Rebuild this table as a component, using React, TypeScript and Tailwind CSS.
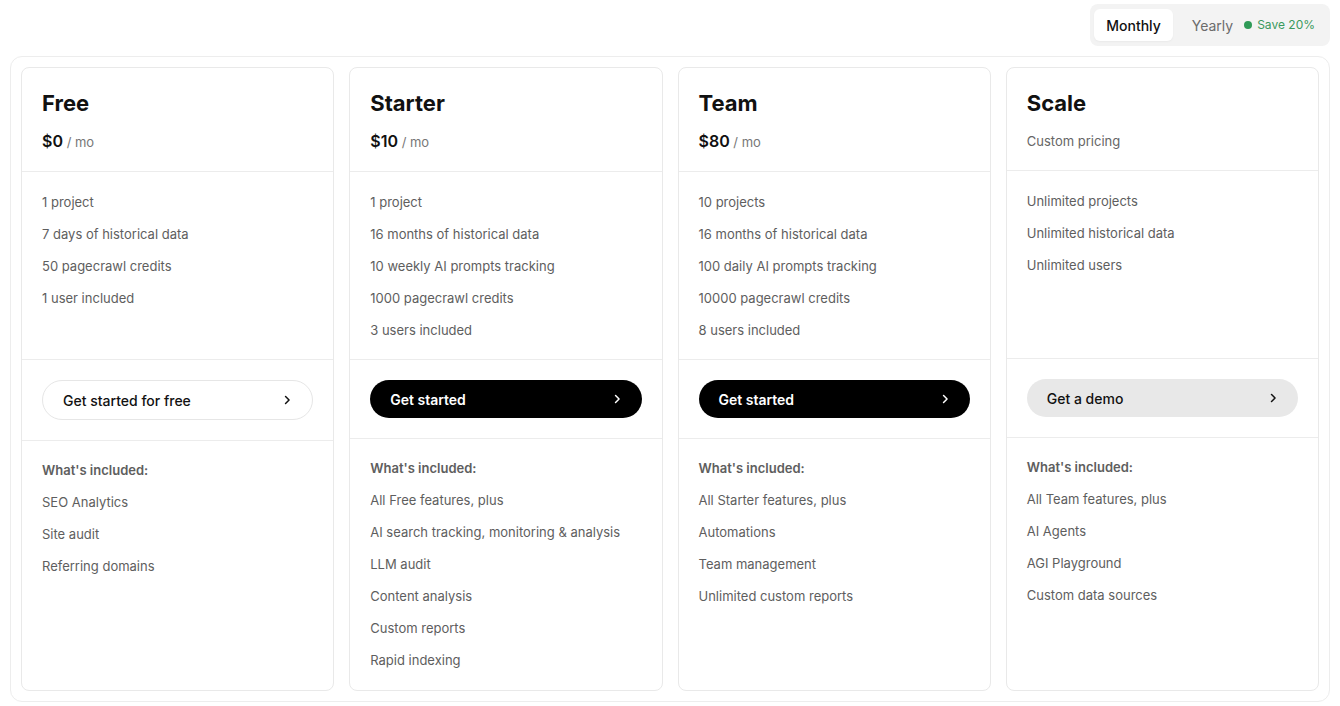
import React from "react";

type Plan = {
  name: string;
  price?: string;
  custom?: string;
  features: string[];
  cta: string;
  variant: "outline" | "dark" | "gray";
  included: string[];
};

const plans: Plan[] = [
  {
    name: "Free",
    price: "$0",
    features: ["1 project", "7 days of historical data", "50 pagecrawl credits", "1 user included"],
    cta: "Get started for free",
    variant: "outline",
    included: ["SEO Analytics", "Site audit", "Referring domains"],
  },
  {
    name: "Starter",
    price: "$10",
    features: [
      "1 project",
      "16 months of historical data",
      "10 weekly AI prompts tracking",
      "1000 pagecrawl credits",
      "3 users included",
    ],
    cta: "Get started",
    variant: "dark",
    included: [
      "All Free features, plus",
      "AI search tracking, monitoring & analysis",
      "LLM audit",
      "Content analysis",
      "Custom reports",
      "Rapid indexing",
    ],
  },
  {
    name: "Team",
    price: "$80",
    features: [
      "10 projects",
      "16 months of historical data",
      "100 daily AI prompts tracking",
      "10000 pagecrawl credits",
      "8 users included",
    ],
    cta: "Get started",
    variant: "dark",
    included: ["All Starter features, plus", "Automations", "Team management", "Unlimited custom reports"],
  },
  {
    name: "Scale",
    custom: "Custom pricing",
    features: ["Unlimited projects", "Unlimited historical data", "Unlimited users"],
    cta: "Get a demo",
    variant: "gray",
    included: ["All Team features, plus", "AI Agents", "AGI Playground", "Custom data sources"],
  },
];

function Chevron({ className }: { className?: string }) {
  return (
    <svg
      width="14"
      height="14"
      viewBox="0 0 24 24"
      fill="none"
      stroke="currentColor"
      strokeWidth="2.6"
      strokeLinecap="round"
      strokeLinejoin="round"
      className={className}
    >
      <path d="m9.5 18 6-6-6-6" />
    </svg>
  );
}

function Card({ plan }: { plan: Plan }) {
  const btnBase =
    "flex w-full items-center justify-between rounded-full pl-5 pr-[18px] text-[14px]";
  let btn = "";
  if (plan.variant === "outline") btn = "h-10 border border-[#e6e6e6] bg-white text-[#111] font-medium";
  if (plan.variant === "dark") btn = "h-[38px] bg-black text-white font-semibold";
  if (plan.variant === "gray") btn = "h-[38px] bg-[#e8e8e8] text-[#111] font-medium";
  return (
    <div className="flex flex-1 flex-col rounded-lg border border-[#e9e9e9] bg-white">
      <div className="border-b border-[#ececec] px-5 pb-[17px] pt-[21px]">
        <div className="text-[22px] font-bold leading-7 text-[#111]">{plan.name}</div>
        {plan.price ? (
          <div className="mt-3 leading-6">
            <span className="text-[16px] font-semibold text-[#111]">{plan.price}</span>
            <span className="text-[13px] text-[#777]"> / mo</span>
          </div>
        ) : (
          <div className="mt-3 text-[13px] leading-6 text-[#666]">{plan.custom}</div>
        )}
      </div>
      <div className="flex h-[188px] flex-col gap-3 border-b border-[#ececec] px-5 pt-5">
        {plan.features.map((f) => (
          <div key={f} className="text-[13px] leading-5 text-[#5e5e5e]">
            {f}
          </div>
        ))}
      </div>
      <div className="border-b border-[#ececec] px-5 py-5">
        <button className={`${btnBase} ${btn}`}>
          <span>{plan.cta}</span>
          <Chevron />
        </button>
      </div>
      <div className="flex flex-col gap-3 px-5 pb-5 pt-[19px]">
        <div className="text-[13px] font-semibold leading-5 text-[#5e5e5e]">What's included:</div>
        {plan.included.map((f) => (
          <div key={f} className="text-[13px] leading-5 text-[#5e5e5e]">
            {f}
          </div>
        ))}
      </div>
    </div>
  );
}

export default function App() {
  return (
    <div
      className="min-h-[706px] bg-white px-[10px] pt-1"
      style={{ fontFamily: "Inter, 'Noto Sans', 'Liberation Sans', sans-serif" }}
    >
      <div className="flex justify-end">
        <div className="flex items-center rounded-lg bg-[#f3f3f3] px-1 py-[5px]">
          <button className="h-8 rounded-md bg-white px-3 text-[14px] font-medium text-[#111] shadow-[0_1px_2px_rgba(0,0,0,0.04)]">
            Monthly
          </button>
          <button className="flex h-8 items-center pl-[19px] pr-[11px] text-[14px] text-[#6b6b6b]">
            Yearly
            <span className="ml-[11px] h-2 w-2 rounded-full bg-[#2f9a57]" />
            <span className="ml-[5px] text-[12px] text-[#3a9a5e]">Save 20%</span>
          </button>
        </div>
      </div>
      <div className="mt-[10px] flex gap-[15px] rounded-xl border border-[#ededed] p-[10px]">
        {plans.map((p) => (
          <Card key={p.name} plan={p} />
        ))}
      </div>
    </div>
  );
}
